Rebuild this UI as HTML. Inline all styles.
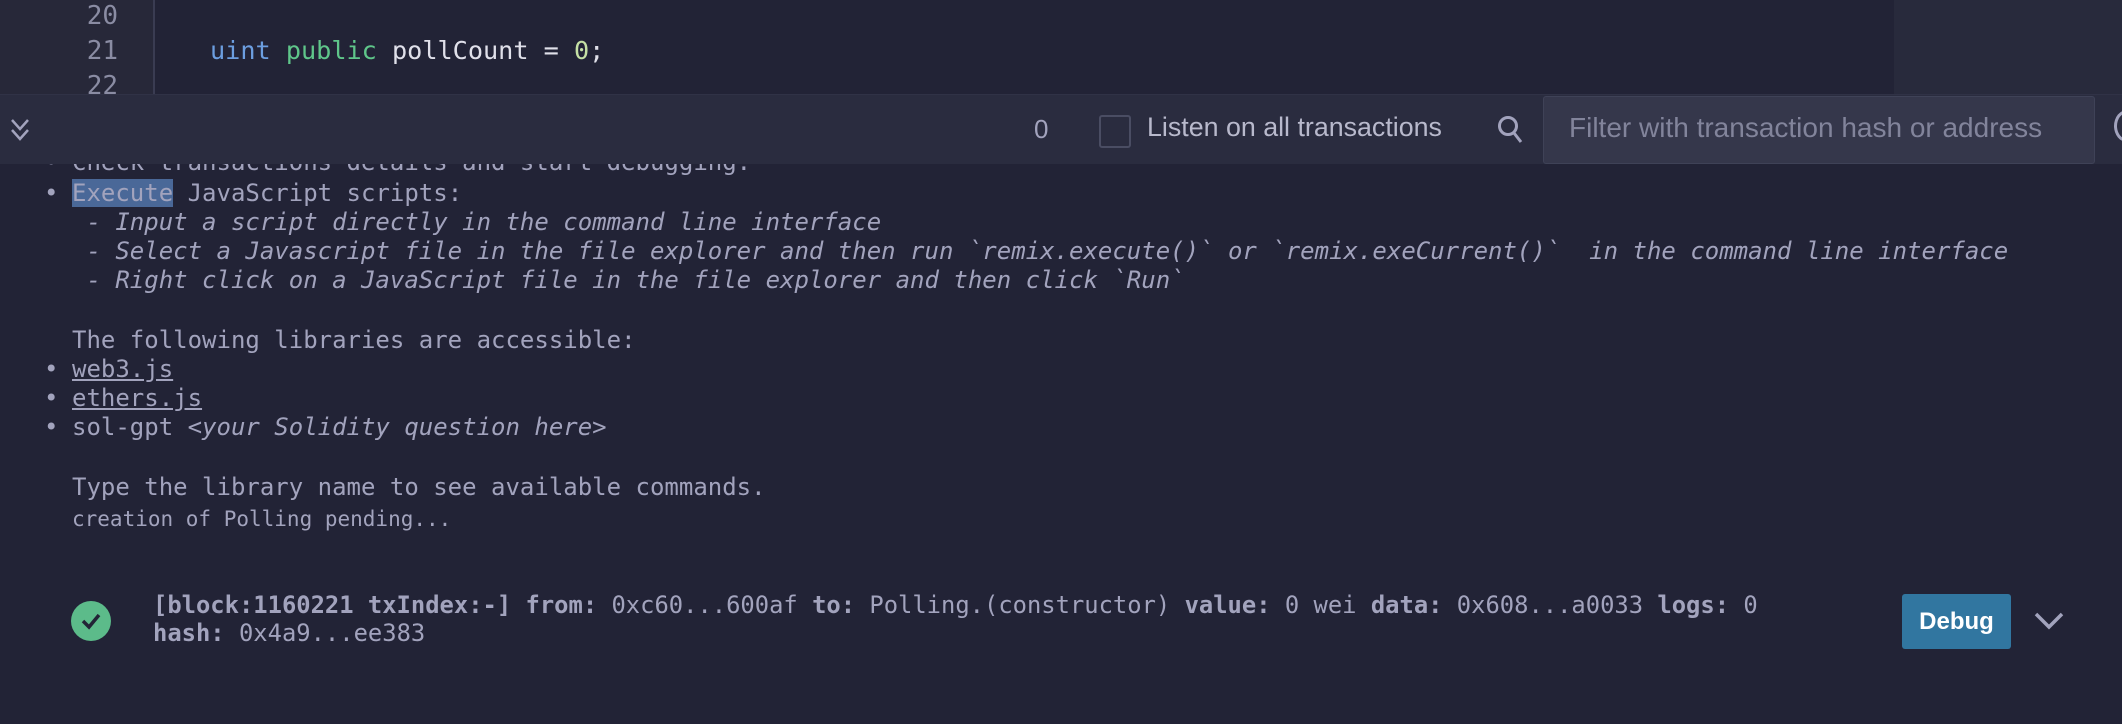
<!DOCTYPE html>
<html><head><style>
body{margin:0;width:2122px;height:724px;background:#222336;overflow:hidden;position:relative;font-family:"DejaVu Sans Mono","Liberation Mono",monospace;color:#a2a3bd}
.abs{position:absolute;white-space:pre}
.ln{font-size:26px;color:#8a8ca3;left:56px;width:62px;text-align:right}
.c{font-size:24px;left:72px;line-height:29px}
.b{font-size:24px;left:44px;line-height:29px}
.i{font-style:italic}
</style></head><body>
<div class="abs" style="left:0;top:0;width:154px;height:94px;background:#272839"></div>
<div class="abs" style="left:153px;top:0;width:2px;height:94px;background:#3a3c52"></div>
<div class="abs" style="left:1894px;top:0;width:228px;height:94px;background:#282a3c"></div>
<div class="abs ln" style="top:1px">20</div>
<div class="abs ln" style="top:36px">21</div>
<div class="abs ln" style="top:71px;height:23px;overflow:hidden">22</div>
<div class="abs" style="left:210px;top:36px;font-size:25.2px;color:#e0e0ea"><span style="color:#6c9ee0">uint</span> <span style="color:#5fc68a">public</span> pollCount = <span style="color:#c5e0a5">0</span>;</div>

<div class="abs b" style="top:148px">•</div><div class="abs c" style="top:148px">Check transactions details and start debugging.</div>
<div class="abs" style="left:0;top:94px;width:2122px;height:69px;background:#2a2c3f;border-top:1px solid #303246"></div>
<svg class="abs" style="left:9px;top:116px" width="22" height="28" viewBox="0 0 22 28"><path d="M3 4l8 9 8-9M3 14l8 9 8-9" fill="none" stroke="#a2a3bd" stroke-width="2.5"/></svg>
<div class="abs" style="left:1034px;top:114px;font:26px 'Liberation Sans',sans-serif">0</div>
<div class="abs" style="left:1099px;top:115px;width:28px;height:29px;border:2px solid #4a4d63;border-radius:3px"></div>
<div class="abs" style="left:1147px;top:112px;font:26.8px 'Liberation Sans',sans-serif;color:#b8b9cc">Listen on all transactions</div>
<svg class="abs" style="left:1496px;top:114px" width="30" height="32" viewBox="0 0 30 32"><circle cx="12" cy="12" r="8.5" fill="none" stroke="#a2a3bd" stroke-width="3"/><path d="M18 19l7 9" stroke="#a2a3bd" stroke-width="3"/></svg>
<div class="abs" style="left:1543px;top:96px;width:550px;height:66px;background:#35374b;border:1px solid #3f4257;border-radius:3px"></div>
<div class="abs" style="left:1569px;top:112px;font:28px 'Liberation Sans',sans-serif;color:#82849b">Filter with transaction hash or address</div>
<div class="abs" style="left:2114px;top:110px;width:20px;height:26px;border:3px solid #a2a3bd;border-radius:50%"></div>

<div class="abs b" style="top:179px">•</div><div class="abs c" style="top:179px"><span style="background:#4a6898">Execute</span> JavaScript scripts:</div>
<div class="abs c i" style="top:208px;left:72px"> - Input a script directly in the command line interface</div>
<div class="abs c i" style="top:237px;left:72px"> - Select a Javascript file in the file explorer and then run `remix.execute()` or `remix.exeCurrent()`  in the command line interface</div>
<div class="abs c i" style="top:266px;left:72px"> - Right click on a JavaScript file in the file explorer and then click `Run`</div>
<div class="abs c" style="top:326px">The following libraries are accessible:</div>
<div class="abs b" style="top:355px">•</div><div class="abs c" style="top:355px"><u>web3.js</u></div>
<div class="abs b" style="top:384px">•</div><div class="abs c" style="top:384px"><u>ethers.js</u></div>
<div class="abs b" style="top:413px">•</div><div class="abs c" style="top:413px">sol-gpt <span class="i">&lt;your Solidity question here&gt;</span></div>
<div class="abs c" style="top:473px">Type the library name to see available commands.</div>
<div class="abs" style="top:507px;left:72px;font-size:21px">creation of Polling pending...</div>

<div class="abs" style="left:71px;top:601px;width:40px;height:40px;border-radius:50%;background:#5cbb8a"></div>
<svg class="abs" style="left:71px;top:601px" width="40" height="40"><path d="M12 20l6 6 10-12" fill="none" stroke="#222336" stroke-width="3.5"/></svg>
<div class="abs" style="left:153px;top:591px;font-size:23.8px"><b>[block:1160221 txIndex:-]</b> <b>from:</b> 0xc60...600af <b>to:</b> Polling.(constructor) <b>value:</b> 0 wei <b>data:</b> 0x608...a0033 <b>logs:</b> 0</div>
<div class="abs" style="left:153px;top:619px;font-size:23.8px"><b>hash:</b> 0x4a9...ee383</div>
<div class="abs" style="left:1902px;top:594px;width:109px;height:55px;background:#3176a0;border-radius:3px;color:#fff;font:bold 24px 'Liberation Sans',sans-serif;text-align:center;line-height:55px">Debug</div>
<svg class="abs" style="left:2033px;top:610px" width="32" height="22"><path d="M3 4l13 13 13-13" fill="none" stroke="#a2a3bd" stroke-width="3.5"/></svg>
</body></html>
